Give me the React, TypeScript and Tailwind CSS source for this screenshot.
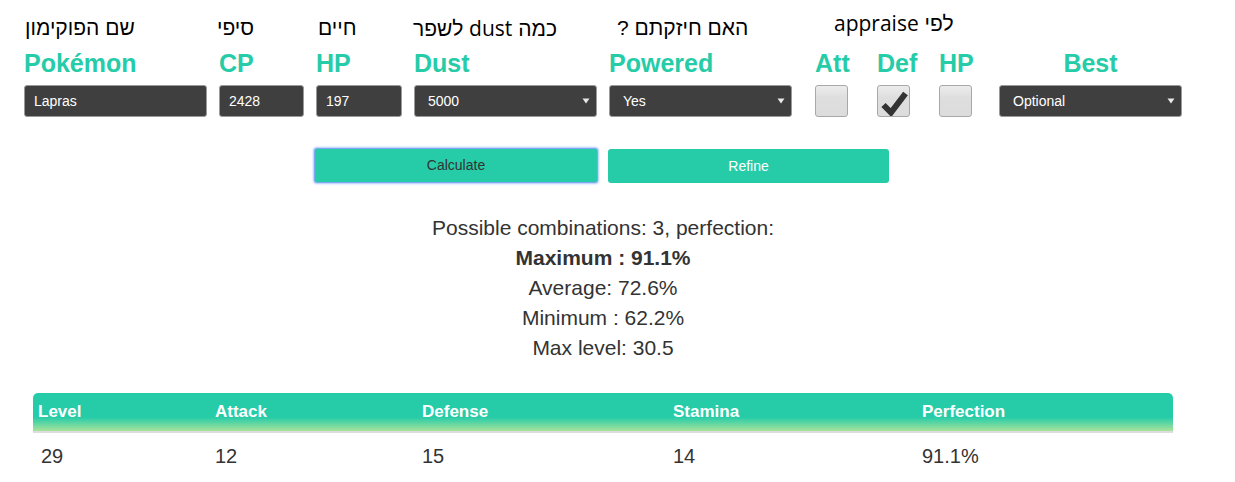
import React from "react";

const LAT = "font-['Open_Sans','Liberation_Sans',sans-serif]";

function Heb({ children, className = "" }: { children: React.ReactNode; className?: string }) {
  return (
    <div className={`h-[43px] pt-[13px] text-[21px] leading-[30px] text-black whitespace-nowrap font-['Liberation_Sans',Arial,sans-serif] ${className}`}>
      <span dir="rtl" className="inline-block">{children}</span>
    </div>
  );
}

function Label({ children, className = "" }: { children: React.ReactNode; className?: string }) {
  return (
    <div className={`mt-[5px] h-[30px] text-[25px] leading-[30px] font-bold text-[#26cca8] whitespace-nowrap ${className}`}>
      {children}
    </div>
  );
}

function TextBox({ value }: { value: string }) {
  return (
    <div className="mt-[7px] h-[32px] w-full rounded-[3px] border border-[#9a9a9a] bg-[#3f3f3f] pl-[9px] text-[14px] leading-[30px] text-white">
      {value}
    </div>
  );
}

function SelectBox({ value }: { value: string }) {
  return (
    <div className="mt-[7px] flex h-[32px] w-full items-center justify-between rounded-[3px] border border-[#9a9a9a] bg-[#3f3f3f] pl-[13px] pr-[6px] text-[14px] text-white">
      <span>{value}</span>
      <svg width="8" height="6" viewBox="0 0 8 6" className="mb-[1px]">
        <path d="M0.5 0.5 L7.5 0.5 L4 5.5 Z" fill="#e8e8e8" />
      </svg>
    </div>
  );
}

function Check({ checked }: { checked?: boolean }) {
  return (
    <div className="mt-[7px] h-[32px] w-[33px] rounded-[3px] border border-[#a8a8a8] bg-[linear-gradient(to_bottom,#ececec_0%,#dedede_40%,#dcdcdc_100%)]">
      {checked && (
        <svg width="31" height="30" viewBox="0 0 31 30">
          <polyline
            points="5.5,19 13,26.5 27.5,7.5"
            fill="none"
            stroke="#333333"
            strokeWidth="6"
            strokeLinejoin="miter"
          />
        </svg>
      )}
    </div>
  );
}

export default function App() {
  const headers = ["Level", "Attack", "Defense", "Stamina", "Perfection"];
  const row = ["29", "12", "15", "14", "91.1%"];
  return (
    <div className="min-h-[482px] w-full bg-white font-['Liberation_Sans',Arial,sans-serif] text-[#333]">
      <div className="ml-[24px] w-[1158px]">
        {/* top form row */}
        <div className="flex items-start">
          <div className="flex w-[183px] flex-col">
            <Heb className="pl-[1px]">שם הפוקימון</Heb>
            <Label>Pokémon</Label>
            <TextBox value="Lapras" />
          </div>
          <div className="ml-[12px] flex w-[85px] flex-col">
            <Heb className="-ml-[2px]">סיפי</Heb>
            <Label>CP</Label>
            <TextBox value="2428" />
          </div>
          <div className="ml-[12px] flex w-[86px] flex-col">
            <Heb className="pl-[2px]">חיים</Heb>
            <Label>HP</Label>
            <TextBox value="197" />
          </div>
          <div className="ml-[12px] flex w-[183px] flex-col">
            <Heb className="-ml-[1px]">
              כמה <span className={LAT}>dust</span> לשפר
            </Heb>
            <Label>Dust</Label>
            <SelectBox value="5000" />
          </div>
          <div className="ml-[12px] flex w-[183px] flex-col">
            <Heb className="pl-[8px]">האם חיזקתם ?</Heb>
            <Label>Powered</Label>
            <SelectBox value="Yes" />
          </div>
          <div className="ml-[23px] flex w-[172px] flex-col">
            <Heb className="pl-[19px] !pt-[8px] h-[43px]">
              לפי <span className={LAT}>appraise</span>
            </Heb>
            <div className="flex">
              <div className="flex w-[62px] flex-col">
                <Label>Att</Label>
                <Check />
              </div>
              <div className="flex w-[62px] flex-col">
                <Label>Def</Label>
                <Check checked />
              </div>
              <div className="flex w-[48px] flex-col">
                <Label>HP</Label>
                <Check />
              </div>
            </div>
          </div>
          <div className="ml-[12px] flex w-[183px] flex-col">
            <div className="h-[43px]" />
            <Label className="text-center">Best</Label>
            <SelectBox value="Optional" />
          </div>
        </div>

        {/* buttons */}
        <div className="mt-[31px] flex justify-center gap-[10px] pr-[3px]">
          <button className="h-[35px] w-[284px] rounded-[3px] border border-[#7ea6f2] bg-[#26cca8] text-[14px] text-[#333] shadow-[0_0_2px_1px_rgba(110,160,250,0.55)]">
            Calculate
          </button>
          <button className="mt-[1px] h-[34px] w-[281px] rounded-[3px] bg-[#26cca8] text-[14px] text-white">
            Refine
          </button>
        </div>

        {/* results */}
        <div className="mt-[30px] flex flex-col items-center text-[21px] leading-[30px] text-[#333]">
          <div>Possible combinations: 3, perfection:</div>
          <div className="font-bold">Maximum : 91.1%</div>
          <div>Average: 72.6%</div>
          <div>Minimum : 62.2%</div>
          <div>Max level: 30.5</div>
        </div>

        {/* table */}
        <div className="mx-[9px] mt-[30px]">
          <div className="grid h-[38px] grid-cols-[177px_207px_251px_249px_1fr] items-center rounded-t-[5px] bg-[linear-gradient(to_bottom,#26cca8_0%,#26cca8_64%,#a9e39b_100%)] text-[17px] font-bold text-white">
            {headers.map((h) => (
              <div key={h} className="pl-[5px]">
                {h}
              </div>
            ))}
          </div>
          <div className="h-[2px] bg-[#dddddd]" />
          <div className="grid grid-cols-[177px_207px_251px_249px_1fr] pt-[11px] text-[20px] leading-[24px] text-[#333]">
            {row.map((c, i) => (
              <div key={i} className={i === 0 ? "pl-[8px]" : "pl-[5px]"}>
                {c}
              </div>
            ))}
          </div>
        </div>
      </div>
    </div>
  );
}
